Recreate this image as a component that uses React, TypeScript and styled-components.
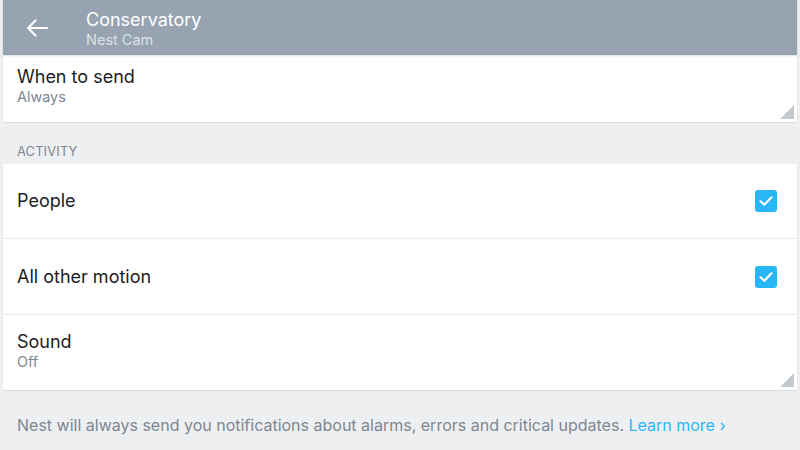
import React from "react";
import styled, { createGlobalStyle } from "styled-components";

const Global = createGlobalStyle`
  html, body { margin: 0; padding: 0; background: #eeeff1; }
  body { font-family: Inter, "Noto Sans", sans-serif; -webkit-font-smoothing: antialiased; }
`;

const Page = styled.div`
  width: 800px;
  height: 450px;
  overflow: hidden;
  background: #eeeff1;
  padding: 0 3px;
  box-sizing: border-box;
`;

const Header = styled.header`
  height: 55px;
  background: #97a3b0;
  display: flex;
  align-items: center;
  box-shadow: 0 1px 2px rgba(0, 0, 0, 0.15);
  position: relative;
  z-index: 1;
`;

const BackButton = styled.div`
  width: 83px;
  display: flex;
  align-items: center;
  padding-left: 22px;
  box-sizing: border-box;
  padding-top: 1px;
`;

const HeaderText = styled.div`
  display: flex;
  flex-direction: column;
  padding-top: 2px;
`;

const Title = styled.div`
  color: #ffffff;
  font-size: 18px;
  line-height: 22px;
`;

const Subtitle = styled.div`
  color: #dde2e8;
  font-size: 14.5px;
  line-height: 17px;
`;

const Card = styled.section`
  background: #ffffff;
  box-shadow: 0 1px 1px rgba(0, 0, 0, 0.08);
`;

const Row = styled.div<{ $h: number }>`
  height: ${(p) => p.$h}px;
  display: flex;
  align-items: center;
  justify-content: space-between;
  padding: 0 20px 0 14px;
  position: relative;
  & + & {
    border-top: 1px solid #e6e8eb;
  }
`;

const RowText = styled.div<{ $shift?: number }>`
  display: flex;
  flex-direction: column;
  margin-top: ${(p) => p.$shift ?? 0}px;
`;

const Label = styled.div`
  color: #1d2024;
  font-size: 18px;
  line-height: 22px;
`;

const Value = styled.div`
  color: #7d8893;
  font-size: 14.4px;
  line-height: 18px;
`;

const Corner = styled.div`
  position: absolute;
  right: 3px;
  bottom: 3px;
  width: 0;
  height: 0;
  border-left: 14px solid transparent;
  border-bottom: 14px solid #c3c9cf;
`;

const SectionLabel = styled.div`
  height: 42px;
  display: flex;
  align-items: flex-end;
  padding: 0 0 5px 14px;
  box-sizing: border-box;
  color: #7d8893;
  font-size: 12.8px;
  letter-spacing: 0.2px;
  text-transform: uppercase;
`;

const Check = styled.div`
  width: 22px;
  height: 22px;
  border-radius: 3px;
  background: #29b6f6;
  display: flex;
  align-items: center;
  justify-content: center;
`;

const Footer = styled.p`
  margin: 0;
  padding: 25px 0 0 14px;
  color: #7d8792;
  font-size: 16px;
  line-height: 20px;
`;

const Link = styled.span`
  color: #29b6f6;
`;

const CheckIcon = () => (
  <svg width="16" height="16" viewBox="0 0 16 16">
    <path d="M2.5 8.3 L6.3 11.8 L13.5 4.3" fill="none" stroke="#fff" strokeWidth="2.2" strokeLinecap="round" strokeLinejoin="round" />
  </svg>
);

export default function App() {
  return (
    <Page>
      <Global />
      <Header>
        <BackButton>
          <svg width="24" height="20" viewBox="0 0 24 20">
            <path d="M22 10 H3 M10.5 2.5 L3 10 L10.5 17.5" fill="none" stroke="#fff" strokeWidth="2.2" strokeLinecap="round" strokeLinejoin="round" />
          </svg>
        </BackButton>
        <HeaderText>
          <Title>Conservatory</Title>
          <Subtitle>Nest Cam</Subtitle>
        </HeaderText>
      </Header>
      <Card>
        <Row $h={67}>
          <RowText $shift={-6}>
            <Label>When to send</Label>
            <Value>Always</Value>
          </RowText>
          <Corner />
        </Row>
      </Card>
      <SectionLabel>Activity</SectionLabel>
      <Card>
        <Row $h={74}>
          <Label>People</Label>
          <Check><CheckIcon /></Check>
        </Row>
        <Row $h={75}>
          <Label>All other motion</Label>
          <Check><CheckIcon /></Check>
        </Row>
        <Row $h={75}>
          <RowText $shift={-4}>
            <Label>Sound</Label>
            <Value>Off</Value>
          </RowText>
          <Corner />
        </Row>
      </Card>
      <Footer>
        Nest will always send you notifications about alarms, errors and critical updates. <Link>Learn more ›</Link>
      </Footer>
    </Page>
  );
}
